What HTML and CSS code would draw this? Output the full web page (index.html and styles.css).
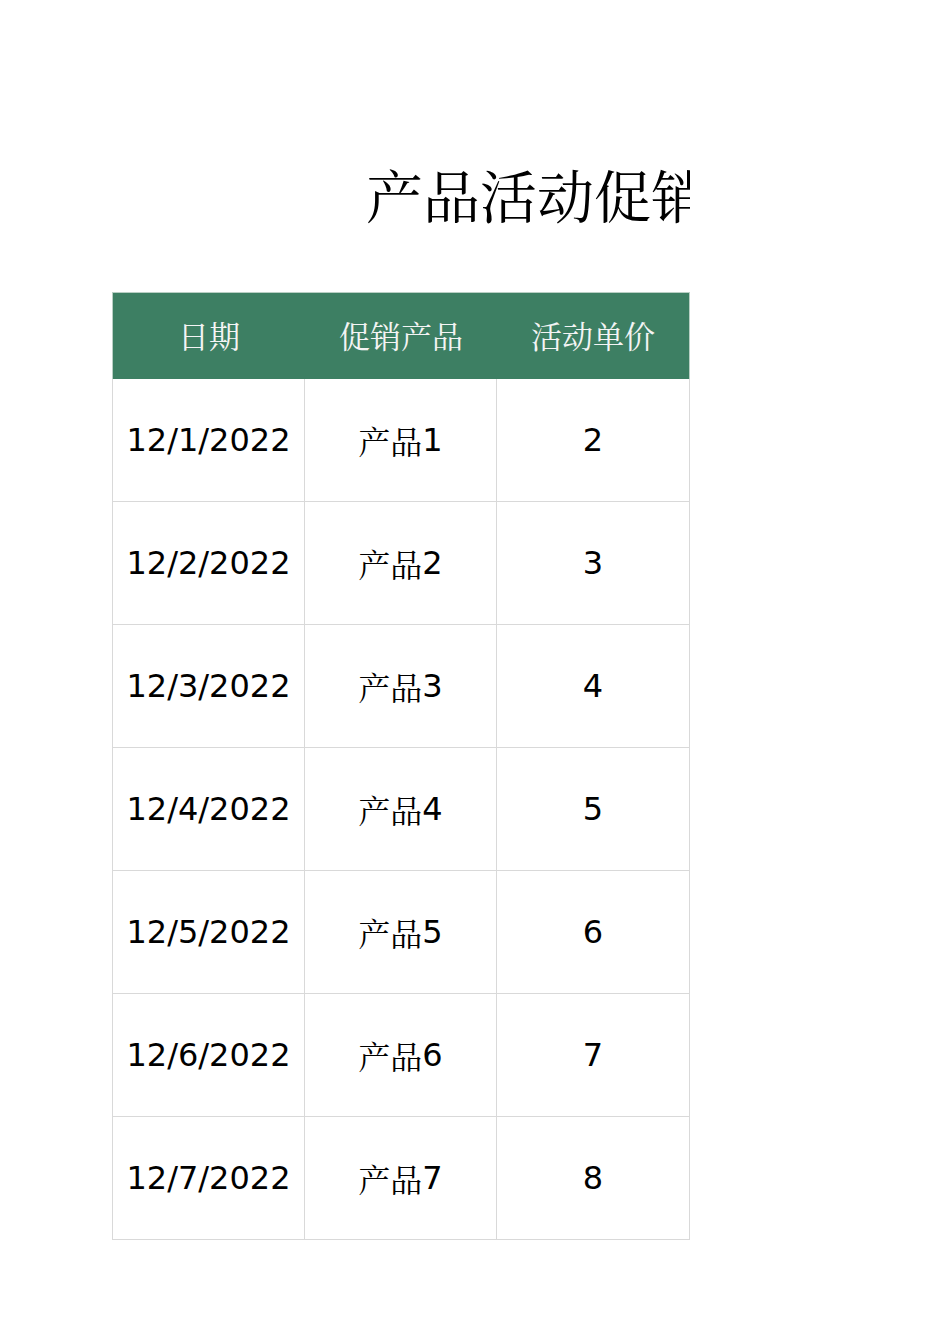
FILE: index.html
```html
<!DOCTYPE html>
<html lang="zh-CN">
<head>
<meta charset="utf-8">
<title>产品活动促销</title>
<link rel="stylesheet" href="styles.css">
</head>
<body>
<div class="page">
  <div class="title-box"><div class="title">产品活动促销</div></div>
  <div class="sheet">
    <div class="hcell">日期</div>
    <div class="hcell">促销产品</div>
    <div class="hcell">活动单价</div>

    <div class="cell num">12/1/2022</div><div class="cell"><span class="cjk">产品</span>1</div><div class="cell num">2</div>
    <div class="cell num">12/2/2022</div><div class="cell"><span class="cjk">产品</span>2</div><div class="cell num">3</div>
    <div class="cell num">12/3/2022</div><div class="cell"><span class="cjk">产品</span>3</div><div class="cell num">4</div>
    <div class="cell num">12/4/2022</div><div class="cell"><span class="cjk">产品</span>4</div><div class="cell num">5</div>
    <div class="cell num">12/5/2022</div><div class="cell"><span class="cjk">产品</span>5</div><div class="cell num">6</div>
    <div class="cell num">12/6/2022</div><div class="cell"><span class="cjk">产品</span>6</div><div class="cell num">7</div>
    <div class="cell num">12/7/2022</div><div class="cell"><span class="cjk">产品</span>7</div><div class="cell num">8</div>
  </div>
</div>
</body>
</html>
```

FILE: styles.css
```css
html, body {
  margin: 0;
  padding: 0;
  background: #ffffff;
}

.page {
  padding: 158px 0 0 112px;
}

.title-box {
  width: 578px;
  height: 72px;
  overflow: hidden;
}

.title {
  padding-left: 254px;
  white-space: nowrap;
  font-family: "Noto Serif CJK SC", "Noto Sans CJK SC", serif;
  font-size: 57px;
  line-height: 70px;
  color: #000000;
}

.sheet {
  margin-top: 62px;
  width: 578px;
  display: grid;
  grid-template-columns: 193px 192px 193px;
  grid-template-rows: 87px repeat(7, 123px);
  box-sizing: border-box;
}

.hcell {
  background: #3d7f63;
  color: #f4f4f4;
  font-family: "Noto Serif CJK SC", "Noto Sans CJK SC", serif;
  font-size: 31px;
  display: flex;
  align-items: center;
  justify-content: center;
  padding-bottom: 3px;
  border-top: 1px solid #b9cfc4;
  box-sizing: border-box;
}

.hcell:first-child {
  border-left: 1px solid #b9cfc4;
}

.hcell:nth-child(3) {
  border-right: 1px solid #b9cfc4;
}

.cell {
  display: flex;
  align-items: center;
  justify-content: center;
  font-family: "DejaVu Sans", sans-serif;
  font-size: 32px;
  color: #000000;
  border-right: 1px solid #d9d9d9;
  border-bottom: 1px solid #d9d9d9;
  box-sizing: border-box;
}

.cell:nth-child(3n+1) {
  border-left: 1px solid #d9d9d9;
}

.cjk {
  font-family: "Noto Serif CJK SC", "Noto Sans CJK SC", serif;
  font-size: 32px;
}
```
